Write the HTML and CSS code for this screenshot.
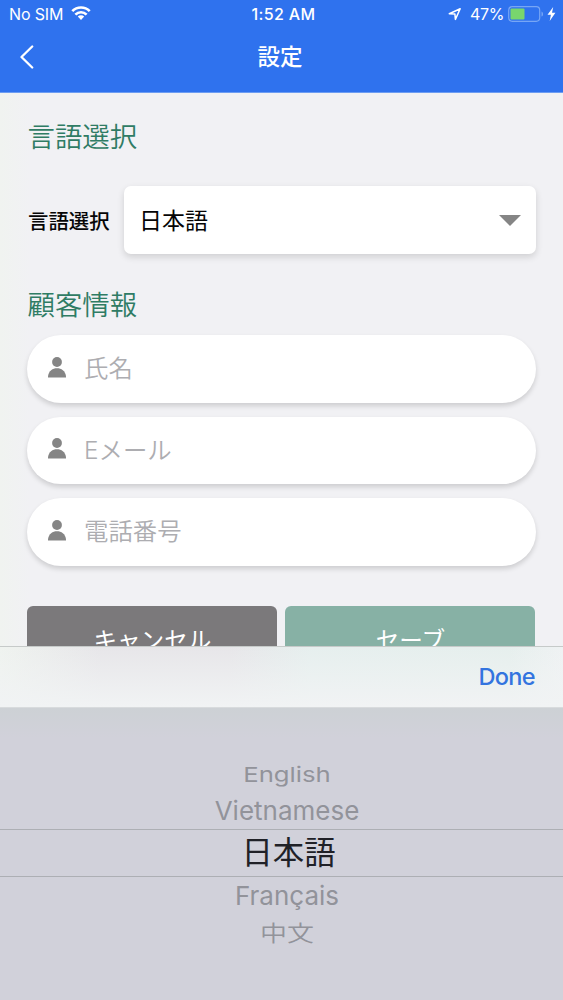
FILE: index.html
```html
<!DOCTYPE html>
<html lang="ja">
<head>
<meta charset="utf-8">
<title>設定</title>
<link rel="stylesheet" href="styles.css">
</head>
<body>
<div class="screen">
  <header class="header">
    <div class="status">
      <div class="status-left">
        <span class="carrier">No SIM</span>
        <svg class="wifi" width="20" height="14" viewBox="0 0 20 14"><g fill="none" stroke="#fff" stroke-width="2.700"><path d="M1.300 5.100a12.300 12.300 0 0 1 17.400 0"/><path d="M4.400 8.600a7.900 7.900 0 0 1 11.200 0"/></g><path d="M6.800 10.600a4.500 4.500 0 0 1 6.400 0L10 13.900z" fill="#fff"/></svg>
      </div>
      <span class="time">1:52 AM</span>
      <div class="status-right">
        <svg class="location" width="14" height="14" viewBox="0 0 14 14"><path d="M1.300 6.800 12.200 1.700 7.400 12.400 6.900 7z" fill="none" stroke="#fff" stroke-width="1.500" stroke-linejoin="round"/></svg>
        <span class="percent">47%</span>
        <svg class="battery" width="36" height="16" viewBox="0 0 36 16"><rect x=".7" y=".7" width="31" height="14.600" rx="3.500" fill="none" stroke="#77a6f5" stroke-width="1.200"/><rect x="2.500" y="2.500" width="14" height="11" rx="1" fill="#78d66d"/><path d="M33.500 5.400c2 .8 2 4.400 0 5.200z" fill="#77a6f5"/></svg>
        <svg class="bolt" width="9" height="14" viewBox="0 0 9 14"><path d="M6.200 0 .5 7.800h3.400L2.700 14l5.700-8.200H5z" fill="#fff"/></svg>
      </div>
    </div>
    <nav class="nav">
      <svg class="back" width="15" height="24" viewBox="0 0 15 24"><path d="M13.200 1.500 2.500 12l10.700 10.500" fill="none" stroke="#fff" stroke-width="2.300" stroke-linecap="round" stroke-linejoin="round"/></svg>
      <h1 class="title">設定</h1>
      <span></span>
    </nav>
  </header>

  <main class="content">
    <h2 class="section">言語選択</h2>
    <div class="language">
      <span class="label">言語選択</span>
      <div class="select"><span class="value">日本語</span><svg width="22" height="11" viewBox="0 0 22 11"><path d="M0 0h22L11 11z" fill="#858585"/></svg></div>
    </div>
    <h2 class="section customer">顧客情報</h2>
    <div class="fields">
      <div class="field"><svg class="person" width="18" height="21" viewBox="0 0 18 21"><circle cx="9" cy="5" r="4.900"/><path d="M0 20.500v-1.200C.8 13.700 4.600 11.300 9 11.300s8.200 2.400 9 8v1.200z"/></svg><span class="hint">氏名</span></div>
      <div class="field"><svg class="person" width="18" height="21" viewBox="0 0 18 21"><circle cx="9" cy="5" r="4.900"/><path d="M0 20.500v-1.200C.8 13.700 4.600 11.300 9 11.300s8.200 2.400 9 8v1.200z"/></svg><span class="hint">Eメール</span></div>
      <div class="field"><svg class="person" width="18" height="21" viewBox="0 0 18 21"><circle cx="9" cy="5" r="4.900"/><path d="M0 20.500v-1.200C.8 13.700 4.600 11.300 9 11.300s8.200 2.400 9 8v1.200z"/></svg><span class="hint">電話番号</span></div>
    </div>
    <div class="actions">
      <div class="button cancel">キャンセル</div>
      <div class="button save">セーブ</div>
    </div>
  </main>

  <div class="accessory"><span class="done">Done</span></div>
  <div class="picker">
    <div class="option far english">English</div>
    <div class="option near vietnamese">Vietnamese</div>
    <div class="option selected">日本語</div>
    <div class="option near french">Français</div>
    <div class="option far chinese">中文</div>
  </div>
</div>
</body>
</html>
```
FILE: styles.css
```css
* { box-sizing: border-box; }
body { margin: 0; }
.screen {
  width: 563px;
  height: 1000px;
  display: flex;
  flex-direction: column;
  overflow: hidden;
  background: #f1f1f4;
  font-family: Inter, "Noto Sans CJK JP", sans-serif;
}
svg { display: block; flex: none; }

.header { height: 93px; flex: none; background: #2f72ee; color: #fff; border-bottom: 1px solid #6d9df2; }
.status { height: 29px; display: grid; grid-template-columns: 1fr auto 1fr; align-items: center; padding: 0 7px 0 9px; font-size: 16px; }
.status-left, .status-right { display: flex; align-items: center; }
.status-right { justify-content: flex-end; }
.status-right svg { margin-top: -1px; }
.carrier, .time, .percent { padding-bottom: 1px; }
.carrier { letter-spacing: -.15px; }
.wifi { margin-left: 8px; margin-top: -3px; }
.time { font-weight: 500; font-size: 16px; letter-spacing: .35px; padding-left: 2px; }
.percent { margin: 0 4px 0 8px; letter-spacing: -.4px; }
.status-right .bolt { margin-left: 3px; }
.nav { height: 56px; display: grid; grid-template-columns: 1fr auto 1fr; align-items: center; padding: 0 22px 0 19px; }
.title { margin: 0; font-size: 22.500px; font-weight: 500; line-height: 56px; }
.back { margin-top: -1px; }

.content { height: 553px; flex: none; overflow: hidden; padding: 24px 27px 0; background: linear-gradient(90deg, #f0f3f0 0, #f1f1f4 30px); }
.section { margin: 0; font-size: 27.400px; font-weight: 350; line-height: 40px; color: #2f7c64; padding-left: .5px; }
.language { height: 68px; margin-top: 29px; display: flex; align-items: center; }
.label { width: 97px; font-size: 20.400px; font-weight: 500; line-height: 30px; color: #060606; white-space: nowrap; padding: 3px 0 0 1px; }
.select {
  width: 412px; height: 68px; display: flex; align-items: center; justify-content: space-between;
  padding: 0 15px; border-radius: 7px; background: #fff; color: #050505; font-size: 23px;
  box-shadow: 0 3px 7px rgba(0, 0, 0, .14);
}
.value { padding-bottom: 3px; }
.customer { margin-top: 31px; }
.fields { display: grid; gap: 14px; margin-top: 10px; }
.field {
  height: 67.500px; display: flex; align-items: center; gap: 18px; padding-left: 21px;
  border-radius: 34px; background: #fff; color: #adadb1; font-size: 24.400px; font-weight: 350;
  box-shadow: 0 3px 5px rgba(0, 0, 0, .15);
}
.hint { padding-bottom: 4px; }
.person { fill: #858585; margin-top: -3px; }
.actions { display: grid; grid-template-columns: 250px 250px; gap: 8px; margin: 40px 0 0 .4px; }
.button { height: 68px; border-radius: 6px; text-align: center; line-height: 69px; color: #fff; font-size: 23.600px; font-weight: 400; }
.cancel { background: #7b797b; }
.save { background: #87b1a5; }

.accessory {
  height: 61px; flex: none; display: flex; align-items: center; justify-content: flex-end;
  padding-right: 28px; border-top: 1px solid #c6cac9;
  background: linear-gradient(rgba(241, 243, 244, 0), #f1f3f4), linear-gradient(90deg, #eff3ef 0, #e7e6e9 100px, #e7e6e9 230px, #e6efee 310px, #e6efed 510px, #eff2f3 100%);
}
.done { font-size: 23.500px; font-weight: 500; color: #3374df; letter-spacing: -.65px; padding-bottom: 2px; }
.picker {
  height: 293px; flex: none; padding-top: 50px; display: flex; flex-direction: column; align-items: center;
  background: linear-gradient(#cdd1d5, #d1d1da 30px);
  border-top: 1px solid #d8dbdd;
}
.option { width: 100%; padding-left: 11px; display: flex; align-items: center; justify-content: center; line-height: 1; color: #92939a; white-space: nowrap; }
.far { height: 32px; }
.near { height: 39px; font-size: 26px; }
.english { font-size: 25.700px; transform: scaleY(.8); padding-top: 1px; }
.vietnamese { padding-top: 3px; }
.selected { height: 48px; padding-left: 14px; font-size: 31.400px; font-weight: 400; color: #202127; border: solid #adafb4; border-width: 1px 0; padding-top: 1px; }
.french { padding-bottom: 1px; }
.chinese { font-size: 27px; font-weight: 350; transform: scaleY(.81); padding-top: 2px; }
```
